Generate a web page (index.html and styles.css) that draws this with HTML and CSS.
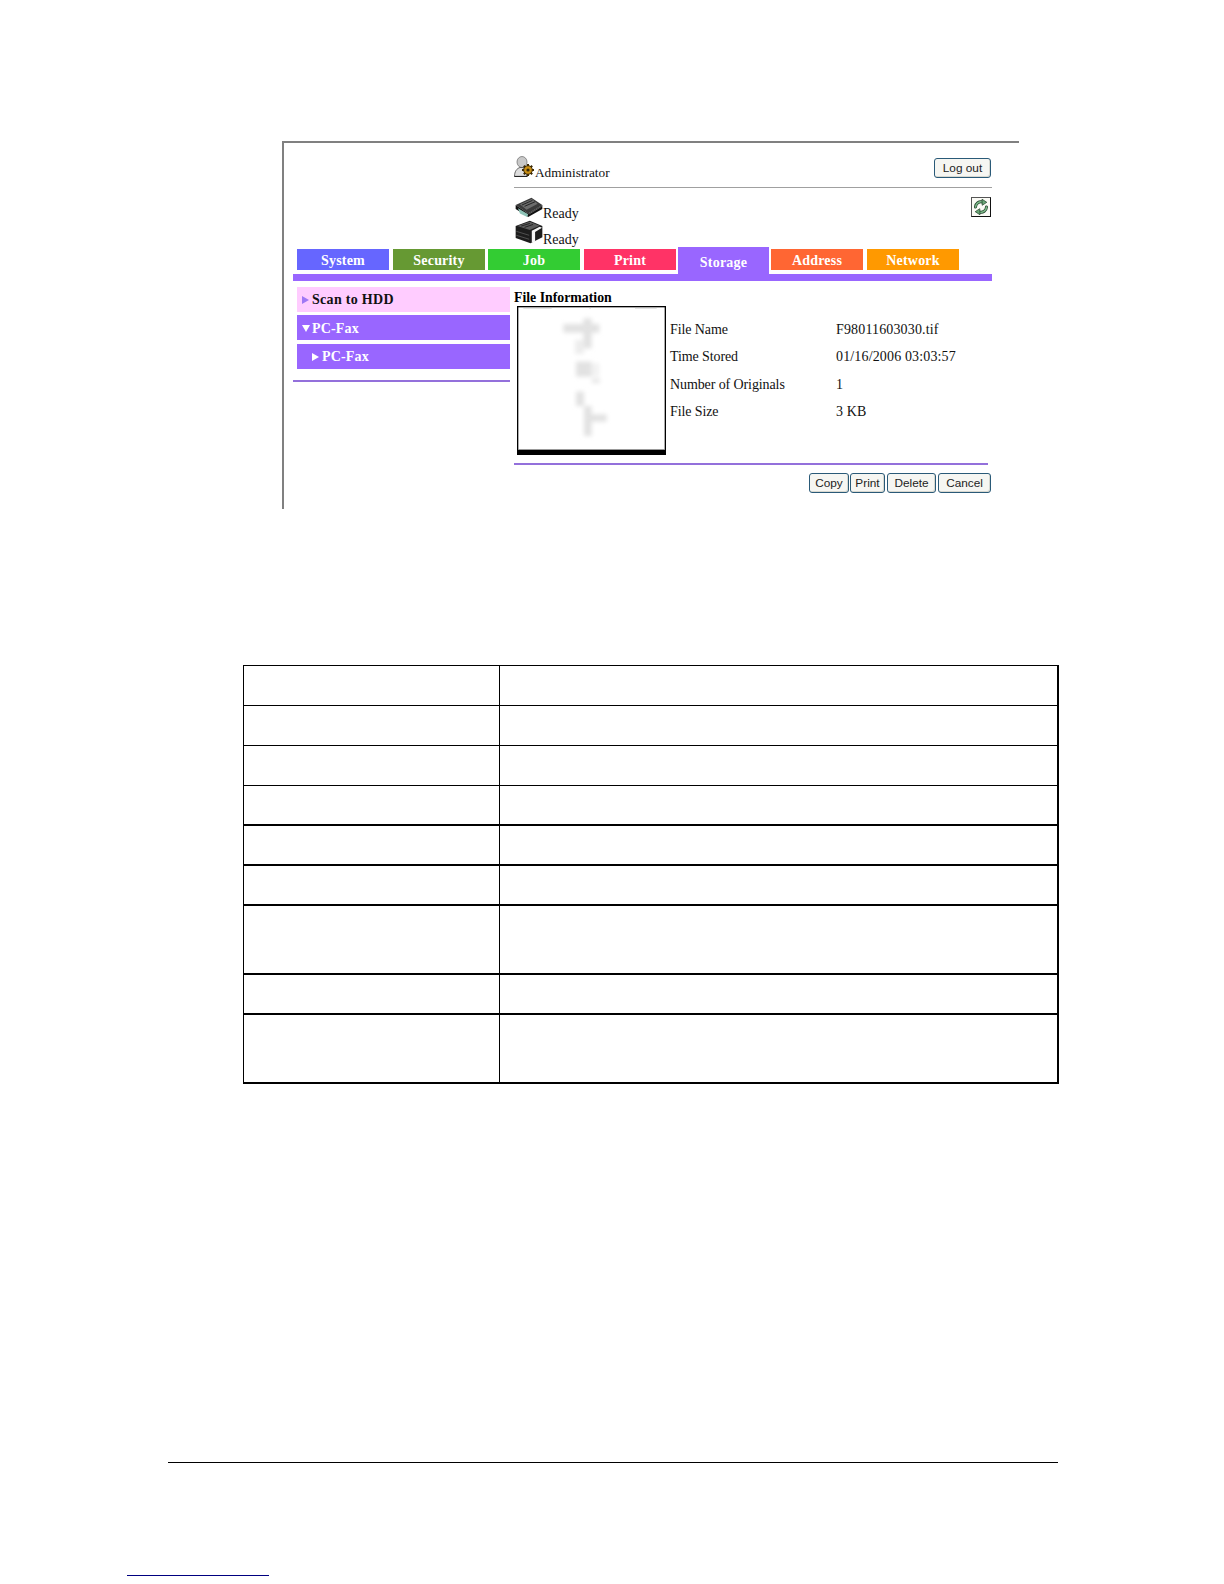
FILE: index.html
```html
<!DOCTYPE html>
<html lang="en">
<head>
<meta charset="utf-8">
<title>File Information</title>
<link rel="stylesheet" href="styles.css">
</head>
<body>
<section class="frame">
  <div class="shot">
    <header class="head">
      <div class="user-row">
        <div class="user">
          <svg class="icon-admin" viewBox="0 0 20 21" aria-hidden="true">
            <ellipse cx="8" cy="6" rx="5" ry="5.500" fill="#c9c9c9" stroke="#777" stroke-width="0.8"/>
            <path d="M0.500 20.500c0-5 2.200-8 5.500-9h4l3 9z" fill="#dedede" stroke="#555" stroke-width="0.900"/>
            <path d="M0.500 20.500h13" stroke="#222" stroke-width="1.200"/>
            <path d="M14 8v12M8 14h12M9.800 9.800l8.400 8.400M18.200 9.800l-8.400 8.400" stroke="#3a2804" stroke-width="2"/>
            <circle cx="14" cy="14" r="4.300" fill="#c98f14" stroke="#3a2804" stroke-width="1"/>
            <circle cx="14" cy="14" r="1.600" fill="#3a2a08"/>
          </svg>
          <span class="user-name">Administrator</span>
        </div>
        <button class="btn btn-logout" type="button">Log out</button>
      </div>
      <div class="status-row">
        <div class="status-list">
          <div class="status">
            <svg class="icon-printer" viewBox="15 126 85 60" aria-hidden="true">
              <path d="M17 150 65 128 98 150 55 176z" fill="#3a3a3a"/>
              <path d="M30 148 66 132 84 146 50 164z" fill="#6c6c6c"/>
              <path d="M36 150 68 136M44 154 76 140" stroke="#222" stroke-width="3"/>
              <path d="M17 150 55 176 98 150 98 162 55 186 17 162z" fill="#111"/>
              <path d="M24 160 55 178 52 186 30 176z" fill="#8fc4b8"/>
              <path d="M58 177 96 154" stroke="#888" stroke-width="2"/>
            </svg>
            <span class="status-text">Ready</span>
          </div>
          <div class="status status-second">
            <svg class="icon-printer-b" viewBox="15 198 85 72" aria-hidden="true">
              <path d="M17 216 60 200 98 216 98 250 62 268 17 252z" fill="#1c1c1c"/>
              <path d="M22 216 60 203 90 215 60 228z" fill="#5c5c5c"/>
              <path d="M34 216 60 208M44 220 70 211" stroke="#222" stroke-width="3"/>
              <path d="M19 232 58 244M19 244 58 256" stroke="#6a6a6a" stroke-width="2"/>
              <path d="M66 230 90 218 97 221 76 234 76 264 66 266z" fill="#f4f4f4"/>
            </svg>
            <span class="status-text">Ready</span>
          </div>
        </div>
        <div class="refresh">
          <svg class="icon-refresh" viewBox="0 0 18 18" aria-hidden="true">
            <g fill="none" stroke-linecap="round">
              <path d="M3.500 9A5.500 5.500 0 0 1 10.500 4M14.500 9A5.500 5.500 0 0 1 7.500 14" stroke="#1d3d25" stroke-width="3"/>
              <path d="M3.500 9A5.500 5.500 0 0 1 10.500 4M14.500 9A5.500 5.500 0 0 1 7.500 14" stroke="#7dbb8a" stroke-width="1.600"/>
            </g>
            <path d="M10 1.200 14.800 4.300 10.200 7.300z" fill="#6aa877" stroke="#1d3d25" stroke-width="0.700"/>
            <path d="M8 16.800 3.200 13.700 7.800 10.700z" fill="#6aa877" stroke="#1d3d25" stroke-width="0.700"/>
          </svg>
        </div>
      </div>
    </header>
    <nav class="tabs">
      <span class="tab tab-system">System</span>
      <span class="tab tab-security">Security</span>
      <span class="tab tab-job">Job</span>
      <span class="tab tab-print">Print</span>
      <span class="tab tab-storage">Storage</span>
      <span class="tab tab-address">Address</span>
      <span class="tab tab-network">Network</span>
    </nav>
    <div class="bar"></div>
    <div class="content">
      <aside class="side">
        <div class="menu menu-scan"><i class="tri tri-right tri-violet"></i>Scan to HDD</div>
        <div class="menu menu-fax"><i class="tri tri-down"></i>PC-Fax</div>
        <div class="menu menu-sub"><i class="tri tri-right"></i>PC-Fax</div>
        <div class="side-rule"></div>
      </aside>
      <main class="detail">
        <h2 class="detail-title">File Information</h2>
        <div class="detail-body">
          <svg class="thumb" viewBox="711 78 447 447" role="img" aria-label="File preview">
            <defs><filter id="soft"><feGaussianBlur stdDeviation="6"/></filter></defs>
            <rect x="711" y="78" width="447" height="447" fill="#000"/>
            <rect x="715" y="82" width="439" height="427" fill="#fff"/>
            <rect x="715" y="507" width="439" height="3" fill="#999"/>
            <g fill="#e2e2e2" filter="url(#soft)">
              <rect x="850" y="132" width="108" height="26"/>
              <rect x="910" y="115" width="25" height="90"/>
              <rect x="885" y="180" width="27" height="42" fill="#ededed"/>
              <rect x="888" y="245" width="47" height="45"/>
              <rect x="935" y="250" width="23" height="40" fill="#f2f2f2"/>
              <rect x="935" y="295" width="25" height="15" fill="#e9e9e9"/>
              <rect x="888" y="335" width="24" height="43"/>
              <rect x="912" y="403" width="68" height="22"/>
              <rect x="912" y="378" width="23" height="90"/>
            </g>
            <g fill="#e4e4e4">
              <rect x="730" y="84" width="85" height="3"/>
              <rect x="928" y="84" width="4" height="3"/>
              <rect x="1065" y="84" width="65" height="3"/>
            </g>
          </svg>
          <dl class="info">
            <dt>File Name</dt><dd>F98011603030.tif</dd>
            <dt>Time Stored</dt><dd>01/16/2006 03:03:57</dd>
            <dt>Number of Originals</dt><dd>1</dd>
            <dt>File Size</dt><dd>3 KB</dd>
          </dl>
        </div>
        <div class="detail-rule"></div>
        <div class="actions">
          <button class="btn btn-copy" type="button">Copy</button>
          <button class="btn btn-print" type="button">Print</button>
          <button class="btn btn-delete" type="button">Delete</button>
          <button class="btn btn-cancel" type="button">Cancel</button>
        </div>
      </main>
    </div>
  </div>
</section>

<table class="grid">
  <colgroup><col class="col-a"><col></colgroup>
  <tbody>
    <tr class="row"><td></td><td></td></tr>
    <tr class="row"><td></td><td></td></tr>
    <tr class="row"><td></td><td></td></tr>
    <tr class="row row-heavy"><td></td><td></td></tr>
    <tr class="row row-heavy"><td></td><td></td></tr>
    <tr class="row row-heavy"><td></td><td></td></tr>
    <tr class="row row-heavy row-tall"><td></td><td></td></tr>
    <tr class="row row-heavy"><td></td><td></td></tr>
    <tr class="row row-heavy row-tall"><td></td><td></td></tr>
  </tbody>
</table>

<footer class="foot">
  <div class="foot-rule"></div>
  <div class="foot-link"></div>
</footer>
</body>
</html>
```
FILE: styles.css
```css
* { box-sizing: border-box; }
html, body { margin: 0; padding: 0; background: #fff; }
body { font-family: "Liberation Serif", serif; color: #111; }

.frame {
  margin: 141px 0 0 282px;
  width: 737px;
  height: 368px;
  border-top: 2px solid #808080;
  border-left: 2px solid #808080;
  overflow: hidden;
}
.shot { padding-left: 9px; width: 708px; }

.head { margin-left: 221px; width: 478px; }
.user-row {
  height: 45px;
  padding-top: 15px;
  display: flex;
  justify-content: space-between;
  align-items: flex-start;
  border-bottom: 1px solid #a0a0a0;
}
.user { display: flex; align-items: flex-end; height: 19px; }
.icon-admin { width: 20px; height: 21px; display: block; margin-top: -2px; flex: none; }
.user-name { font-size: 13.3px; line-height: 14px; margin-left: 1px; position: relative; top: 3px; }

.btn {
  font-family: "Liberation Sans", sans-serif;
  font-size: 11.8px;
  color: #222;
  height: 20px;
  padding: 0;
  line-height: 16px;
  background: #f6f6f2;
  border: 1px solid #2a5a78;
  border-radius: 3px;
  box-shadow: inset -1px -1px 0 #d8d8d0;
}
.btn-logout { width: 57px; margin-right: 1px; }

.status-row {
  height: 61px;
  display: flex;
  justify-content: space-between;
  align-items: flex-start;
}
.status-list { padding-top: 9px; display: flex; flex-direction: column; }
.status { display: flex; align-items: flex-end; height: 20px; margin-left: 1px; }
.status-second { height: 24px; margin-top: 3px; }
.icon-printer { width: 28px; height: 20px; display: block; flex: none; }
.icon-printer-b { width: 28px; height: 24px; display: block; flex: none; }
.status-text { font-size: 14px; line-height: 14px; position: relative; top: 4px; }
.status-second .status-text { top: 3px; }
.refresh {
  width: 20px;
  height: 20px;
  margin: 9px 1px 0 0;
  border: 1px solid #555;
  border-right-color: #111;
  border-bottom-color: #111;
  background: #fbfbf6;
}
.icon-refresh { width: 18px; height: 18px; display: block; }

.tabs {
  height: 27px;
  margin-top: -2px;
  padding-left: 4px;
  display: flex;
  align-items: flex-start;
}
.tab {
  width: 92px;
  height: 21px;
  margin-top: 2px;
  margin-left: 4px;
  color: #fff;
  font-weight: bold;
  font-size: 14px;
  line-height: 23px;
  letter-spacing: 0.2px;
  text-align: center;
}
.tab-system { margin-left: 0; background: #6666ff; }
.tab-security { background: #669933; }
.tab-job { margin-left: 3px; background: #33cc33; }
.tab-print { background: #ff3366; }
.tab-storage {
  width: 91px;
  height: 27px;
  margin: 0 0 0 2px;
  padding-top: 2px;
  line-height: 27px;
  background: #9966ff;
}
.tab-address { margin-left: 2px; background: #ff6633; }
.tab-network { background: #ff9900; }
.bar { height: 7px; width: 699px; background: #9966ff; }

.content { display: flex; width: 699px; }
.side { width: 217px; padding-top: 6px; }
.menu {
  height: 25px;
  margin-left: 4px;
  padding-left: 5px;
  display: flex;
  align-items: center;
  font-weight: bold;
  font-size: 14px;
  line-height: 25px;
  letter-spacing: 0.15px;
  color: #fff;
  background: #9966ff;
}
.menu-scan { background: #ffccff; color: #111; letter-spacing: 0.3px; }
.menu-fax { margin-top: 3px; padding-top: 2px; }
.menu-sub { margin-top: 4px; padding-left: 15px; }
.tri { display: block; width: 0; height: 0; margin-right: 3px; flex: none; }
.tri-right {
  border-left: 7px solid #fff;
  border-top: 4px solid transparent;
  border-bottom: 4px solid transparent;
}
.tri-violet { border-left-color: #a077f5; }
.tri-down {
  border-top: 7px solid #fff;
  border-left: 4px solid transparent;
  border-right: 4px solid transparent;
  margin-right: 2px;
}
.side-rule { height: 2px; margin-top: 11px; background: #9370db; }

.detail { margin-left: 4px; width: 478px; padding-top: 8px; }
.detail-title {
  margin: 0;
  font-size: 13.8px;
  line-height: 17px;
  font-weight: bold;
  color: #000;
}
.detail-body { display: flex; align-items: flex-start; padding-left: 3px; }
.thumb { width: 149px; height: 149px; display: block; flex: none; }
.info {
  margin: 10px 0 0 4px;
  display: grid;
  grid-template-columns: 166px auto;
  grid-auto-rows: 27.3px;
  font-size: 14px;
  line-height: 27.3px;
}
.info dt { margin: 0; letter-spacing: -0.1px; }
.info dd { margin: 0; letter-spacing: 0.15px; }
.detail-rule { height: 2px; width: 474px; margin-top: 8px; background: #9370db; }

.actions { display: flex; justify-content: flex-end; margin: 8px 1px 0 0; gap: 2px; }
.btn-copy { width: 40px; margin-right: -1px; }
.btn-print { width: 35px; }
.btn-delete { width: 49px; }
.btn-cancel { width: 53px; }

.grid {
  margin: 156px 0 0 243px;
  width: 816px;
  table-layout: fixed;
  border-collapse: separate;
  border-spacing: 0;
  border-top: 1px solid #000;
  border-left: 1px solid #000;
  border-right: 2px solid #000;
}
.col-a { width: 256px; }
.grid td {
  padding: 0;
  border-bottom: 1px solid #000;
}
.grid td:first-child { border-right: 1px solid #000; }
.row td { height: 40px; }
.row-heavy td { border-bottom-width: 2px; }
.row-tall td { height: 69px; }

.foot-rule { margin: 378px 0 0 168px; width: 890px; height: 1px; background: #000; }
.foot-link { margin: 112px 0 0 127px; width: 142px; height: 1px; background: #000080; }
```
